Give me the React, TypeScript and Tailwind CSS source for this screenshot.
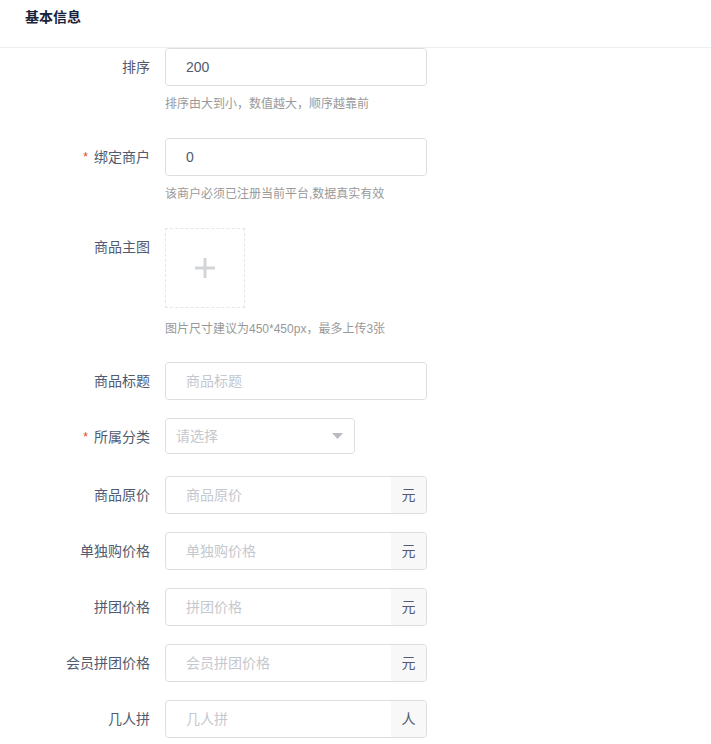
import type { ReactNode } from 'react'

function Label({ text, required }: { text: string; required?: boolean }) {
  return (
    <div className="flex h-[38px] w-[150px] shrink-0 items-center justify-end text-[14px] text-[#515a6e]">
      {required && <span className="mr-[6px] text-[12px] text-[#ed4014]">*</span>}
      {text}
    </div>
  )
}

function Row({ label, required, className, children }: { label: string; required?: boolean; className?: string; children: ReactNode }) {
  return (
    <div className={`flex items-start ${className ?? ''}`}>
      <Label text={label} required={required} />
      <div className="pl-[15px]">{children}</div>
    </div>
  )
}

function Help({ children, className }: { children: ReactNode; className?: string }) {
  return <p className={`text-[12px] leading-5 text-[#999] ${className ?? 'mt-2'}`}>{children}</p>
}

function TextBox({ value, placeholder }: { value?: string; placeholder?: string }) {
  return (
    <div className="flex h-[38px] w-[262px] items-center rounded-[4px] border border-[#dcdee2] bg-white pl-[20px] text-[14px]">
      {value ? <span className="text-[#515a6e]">{value}</span> : <span className="text-[#c5c8ce]">{placeholder}</span>}
    </div>
  )
}

function SuffixBox({ placeholder, suffix }: { placeholder: string; suffix: string }) {
  return (
    <div className="flex h-[38px] w-[262px] overflow-hidden rounded-[4px] border border-[#dcdee2] bg-white text-[14px]">
      <div className="flex flex-1 items-center pl-[20px] text-[#c5c8ce]">{placeholder}</div>
      <div className="flex w-[35px] items-center justify-center bg-[#f8f8f9] text-[#515a6e]">{suffix}</div>
    </div>
  )
}

export default function App() {
  const prices = [
    ['商品原价', '元'],
    ['单独购价格', '元'],
    ['拼团价格', '元'],
    ['会员拼团价格', '元'],
    ['几人拼', '人'],
  ]

  return (
    <div className="min-h-[744px] bg-white" style={{ fontFamily: '"Liberation Sans", "Noto Sans CJK SC", sans-serif' }}>
      <div className="h-[48px] border-b border-[#eeeff1] pl-[25px] pt-[7px] text-[14px] font-bold leading-5 text-[#17233d]">基本信息</div>

      <div>
        <Row label="排序" className="mb-6">
          <TextBox value="200" />
          <Help>排序由大到小，数值越大，顺序越靠前</Help>
        </Row>

        <Row label="绑定商户" required className="mb-6">
          <TextBox value="0" />
          <Help>该商户必须已注册当前平台,数据真实有效</Help>
        </Row>

        <Row label="商品主图" className="mb-[23px]">
          <div className="flex h-[80px] w-[80px] items-center justify-center border border-dashed border-[#e3e5e8] bg-white">
            <svg width="20" height="20" viewBox="0 0 20 20">
              <rect x="8.5" y="0" width="3" height="20" fill="#d4d5d8" />
              <rect x="0" y="8.5" width="20" height="3" fill="#d4d5d8" />
            </svg>
          </div>
          <Help className="mt-[11px]">图片尺寸建议为450*450px，最多上传3张</Help>
        </Row>

        <Row label="商品标题" className="mb-[18px]">
          <TextBox placeholder="商品标题" />
        </Row>

        <Row label="所属分类" required className="mb-[20px]">
          <div className="flex h-[36px] w-[190px] items-center justify-between rounded-[4px] border border-[#dcdee2] bg-white pl-[10px] pr-[11px] text-[14px] text-[#c5c8ce]">
            <span>请选择</span>
            <svg width="11" height="6" viewBox="0 0 11 6">
              <path d="M0 0 L11 0 L5.5 6 Z" fill="#b8bbc1" />
            </svg>
          </div>
        </Row>

        {prices.map(([label, suffix]) => (
          <Row key={label} label={label} className="mb-[18px]">
            <SuffixBox placeholder={label} suffix={suffix} />
          </Row>
        ))}
      </div>
    </div>
  )
}
